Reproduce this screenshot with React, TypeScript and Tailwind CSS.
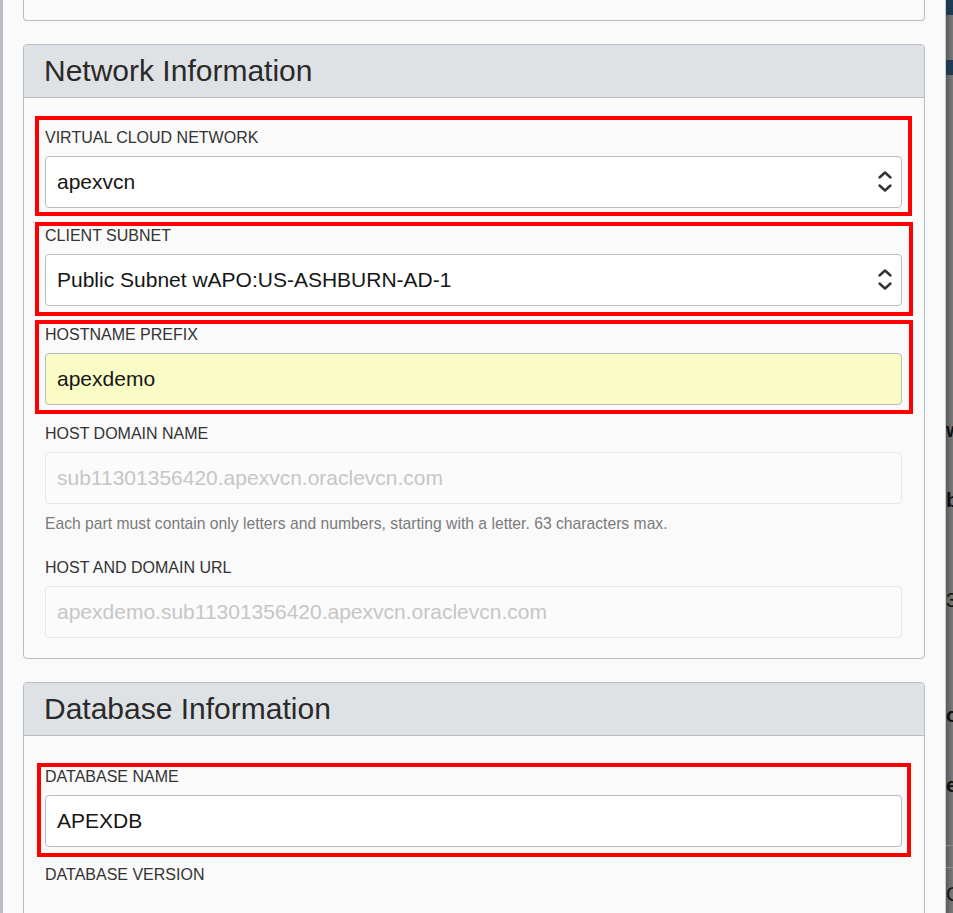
import React from 'react';

const FONT = { fontFamily: '"Liberation Sans", Arial, sans-serif' };

function Chevrons() {
  return (
    <svg width="16" height="24" viewBox="0 0 16 24" fill="none" stroke="#333" strokeWidth="2.4" strokeLinecap="round" strokeLinejoin="round">
      <path d="M2.5 7.5 L8 2.5 L13.5 7.5" />
      <path d="M2.5 15.5 L8 20.5 L13.5 15.5" />
    </svg>
  );
}

function Label({ children }: { children: React.ReactNode }) {
  return <div className="text-[16px] leading-[20px] text-[#333333] uppercase">{children}</div>;
}

function SelectBox({ value }: { value: string }) {
  return (
    <div className="mt-[8px] h-[52px] flex items-center justify-between rounded-[4px] border border-[#b6bbc4] bg-white pl-[11px] pr-[8px]">
      <span className="text-[21px] text-[#161616]">{value}</span>
      <Chevrons />
    </div>
  );
}

function TextBox({ value, tone = 'white' }: { value: string; tone?: 'white' | 'yellow' | 'disabled' }) {
  const box =
    tone === 'yellow'
      ? 'border-[#b6bbc4] bg-[#fafcc6] text-[#161616]'
      : tone === 'disabled'
        ? 'border-[#e4e7eb] bg-[#fbfbfb] text-[#c6c6c6]'
        : 'border-[#b6bbc4] bg-white text-[#161616]';
  return (
    <div className={`mt-[8px] h-[52px] flex items-center rounded-[4px] border pl-[11px] text-[21px] ${box}`}>
      {value}
    </div>
  );
}

function Card({ title, children }: { title: string; children: React.ReactNode }) {
  return (
    <section className="rounded-[4px] border border-[#b8bdc5] bg-[#fafafa]">
      <header className="h-[53px] flex items-center bg-[#dfe2e5] border-b border-[#b8bdc5] rounded-t-[3px] pl-[20px]">
        <h2 className="text-[30px] leading-[34px] text-[#2a2a2a]">{title}</h2>
      </header>
      {children}
    </section>
  );
}

export default function App() {
  return (
    <div className="w-[953px] h-[913px] flex overflow-hidden bg-[#fafafa]" style={FONT}>
      <main className="flex-1 border-l-[3px] border-l-[#b8bdc5] border-r border-r-[#c9ccd1] px-[20px]">
        <div className="h-[21px] rounded-b-[4px] border border-t-0 border-[#b8bdc5]" />

        <div className="mt-[23px]">
          <Card title="Network Information">
            <div className="pl-[21px] pr-[22px] pt-[18px] pb-[20px]">
              <div className="-ml-[10px] -mr-[10px] border-4 border-[#ff0000] pl-[6px] pr-[6px] pt-[8px] pb-[4px]">
                <Label>Virtual Cloud Network</Label>
                <SelectBox value="apexvcn" />
              </div>
              <div className="mt-[6px] -ml-[10px] -mr-[11px] border-4 border-[#ff0000] pl-[6px] pr-[7px] pt-0 pb-[6px]">
                <Label>Client Subnet</Label>
                <SelectBox value="Public Subnet wAPO:US-ASHBURN-AD-1" />
              </div>
              <div className="mt-[4px] -ml-[10px] -mr-[11px] border-4 border-[#ff0000] pl-[6px] pr-[7px] pt-[1px] pb-[5px]">
                <Label>Hostname Prefix</Label>
                <TextBox value="apexdemo" tone="yellow" />
              </div>
              <div className="mt-[10px]">
                <Label>Host Domain Name</Label>
                <TextBox value="sub11301356420.apexvcn.oraclevcn.com" tone="disabled" />
              </div>
              <p className="mt-[10px] text-[15.7px] leading-[20px] text-[#7a7a7a]">
                Each part must contain only letters and numbers, starting with a letter. 63 characters max.
              </p>
              <div className="mt-[24px]">
                <Label>Host and Domain URL</Label>
                <TextBox value="apexdemo.sub11301356420.apexvcn.oraclevcn.com" tone="disabled" />
              </div>
            </div>
          </Card>
        </div>

        <div className="mt-[23px]">
          <Card title="Database Information">
            <div className="pl-[21px] pr-[22px] pt-[27px]">
              <div className="-ml-[8px] -mr-[9px] border-4 border-[#ff0000] pl-[4px] pr-[5px] pt-0 pb-[6px]">
                <Label>Database Name</Label>
                <TextBox value="APEXDB" />
              </div>
              <div className="mt-[8px] pb-[40px]">
                <Label>Database Version</Label>
              </div>
            </div>
          </Card>
        </div>
      </main>

      <aside className="w-[7px] overflow-hidden bg-gradient-to-r from-[#5c5c5c] to-[#7a7a7a] text-[20px] font-bold leading-[20px] text-[#111]">
        <div className="h-[15px] bg-[#1d3a54]" />
        <div className="mt-[45px] h-[15px] bg-[#1d3a54]" />
        <div className="mt-[345px]">w</div>
        <div className="mt-[50px]">b</div>
        <div className="mt-[80px] font-normal">3</div>
        <div className="mt-[95px]">o</div>
        <div className="mt-[50px]">e</div>
        <div className="mt-[50px] h-px bg-[#8a8a8a]" />
        <div className="mt-[21px] h-px bg-[#8a8a8a]" />
        <div className="mt-[16px] font-normal">C</div>
      </aside>
    </div>
  );
}
